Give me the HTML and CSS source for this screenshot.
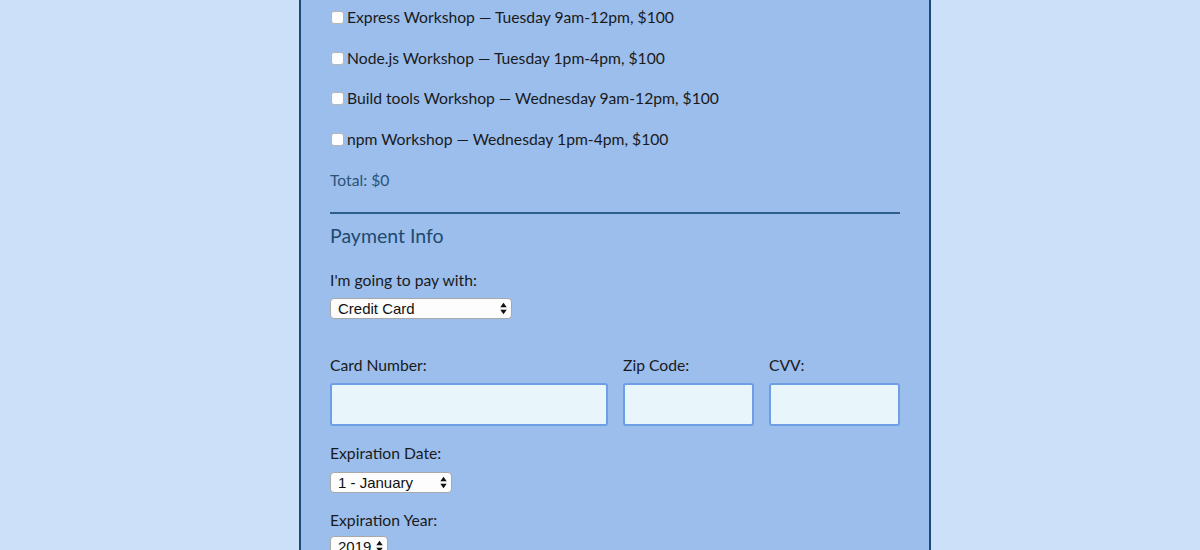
FILE: index.html
```html
<!DOCTYPE html>
<html>
<head>
<meta charset="utf-8">
<link rel="stylesheet" href="styles.css">
</head>
<body>
<div class="page">
  <form class="card">
    <fieldset class="activities">
      <label class="act"><input type="checkbox" class="cb"><span>Express Workshop — Tuesday 9am-12pm, $100</span></label>
      <label class="act"><input type="checkbox" class="cb"><span>Node.js Workshop — Tuesday 1pm-4pm, $100</span></label>
      <label class="act"><input type="checkbox" class="cb"><span>Build tools Workshop — Wednesday 9am-12pm, $100</span></label>
      <label class="act"><input type="checkbox" class="cb"><span>npm Workshop — Wednesday 1pm-4pm, $100</span></label>
      <p class="total">Total: $0</p>
    </fieldset>
    <fieldset class="payment">
      <h2 class="legend">Payment Info</h2>
      <label class="lbl pay-lbl">I'm going to pay with:</label>
      <span class="sel sel-pay">
        <select><option>Credit Card</option></select>
        <svg class="arr" width="7" height="13" viewBox="0 0 7 13"><path d="M0.3 5.3 L3.5 0.8 L6.7 5.3 Z M0.3 7.7 L3.5 12.2 L6.7 7.7 Z" fill="#111"/></svg>
      </span>
      <div class="cc-row">
        <div class="fld fld-num"><label class="lbl">Card Number:</label><input type="text" class="txt"></div>
        <div class="fld fld-zip"><label class="lbl">Zip Code:</label><input type="text" class="txt"></div>
        <div class="fld fld-cvv"><label class="lbl">CVV:</label><input type="text" class="txt"></div>
      </div>
      <label class="lbl exp-lbl">Expiration Date:</label>
      <span class="sel sel-month">
        <select><option>1 - January</option></select>
        <svg class="arr" width="7" height="13" viewBox="0 0 7 13"><path d="M0.3 5.3 L3.5 0.8 L6.7 5.3 Z M0.3 7.7 L3.5 12.2 L6.7 7.7 Z" fill="#111"/></svg>
      </span>
      <label class="lbl year-lbl">Expiration Year:</label>
      <span class="sel sel-year">
        <select><option>2019</option></select>
        <svg class="arr" width="7" height="13" viewBox="0 0 7 13"><path d="M0.3 5.3 L3.5 0.8 L6.7 5.3 Z M0.3 7.7 L3.5 12.2 L6.7 7.7 Z" fill="#111"/></svg>
      </span>
    </fieldset>
  </form>
</div>
</body>
</html>
```
FILE: styles.css
```css
html, body {
  margin: 0;
  padding: 0;
  background: #cde0f9;
  height: 100%;
  overflow: hidden;
}
.page {
  display: flex;
  justify-content: center;
  padding-left: 30px;
}
.card {
  width: 570px;
  padding: 0 29px 40px 29px;
  background: #9bbeed;
  border-left: 2px solid #1f4a78;
  border-right: 2px solid #1f4a78;
  min-height: 600px;
  font-family: Lato, "Noto Sans", sans-serif;
  font-size: 15.7px;
  color: #1a1a1a;
}
fieldset {
  border: 0;
  margin: 0;
  padding: 0;
}
.activities {
  padding-top: 7px;
  padding-bottom: 22px;
  border-bottom: 2px solid #2f5d8c;
}
.act {
  display: flex;
  align-items: center;
  height: 20px;
  margin-bottom: 20.7px;
}
.cb {
  appearance: none;
  -webkit-appearance: none;
  width: 13px;
  height: 13px;
  margin: 1px 3px 0 1px;
  border: 1px solid #b5b5b5;
  border-radius: 3px;
  background: #fff;
  flex: none;
}
.total {
  margin: 0;
  height: 20px;
  line-height: 20px;
  color: #2b5375;
}
.legend {
  margin: 10px 0 0 0;
  height: 24px;
  line-height: 24px;
  font-size: 19.5px;
  font-weight: normal;
  color: #1f4a6f;
}
.lbl {
  display: block;
  height: 20px;
  line-height: 20px;
  color: #1a1a1a;
}
.pay-lbl { margin-top: 22px; }
.sel {
  position: relative;
  display: inline-block;
  vertical-align: top;
}
.sel select {
  appearance: none;
  -webkit-appearance: none;
  display: block;
  height: 21px;
  margin: 0;
  padding: 0 0 0 7px;
  border: 1px solid #a8a8a8;
  border-radius: 4px;
  background: #fdfdfd;
  font-family: "Liberation Sans", Arial, sans-serif;
  font-size: 15px;
  color: #111;
}
.sel .arr {
  position: absolute;
  right: 5px;
  top: 4px;
  pointer-events: none;
}
.sel-pay { margin-top: 8px; }
.sel-pay select { width: 182px; }
.cc-row {
  display: flex;
  gap: 15px;
  margin-top: 36px;
}
.fld { display: flex; flex-direction: column; }
.fld .lbl { margin-bottom: 8px; }
.fld-num { width: 278px; }
.fld-zip { width: 131px; }
.fld-cvv { width: 131px; }
.txt {
  box-sizing: border-box;
  width: 100%;
  height: 43px;
  margin: 0;
  border: 2px solid #6e9fe4;
  border-radius: 3px;
  background: #e8f6fb;
}
.exp-lbl { margin-top: 17px; }
.sel-month { margin-top: 9px; }
.sel-month select { width: 122px; }
.year-lbl { margin-top: 17px; }
.sel-year { margin-top: 6px; }
.sel-year select { width: 58px; }
```
